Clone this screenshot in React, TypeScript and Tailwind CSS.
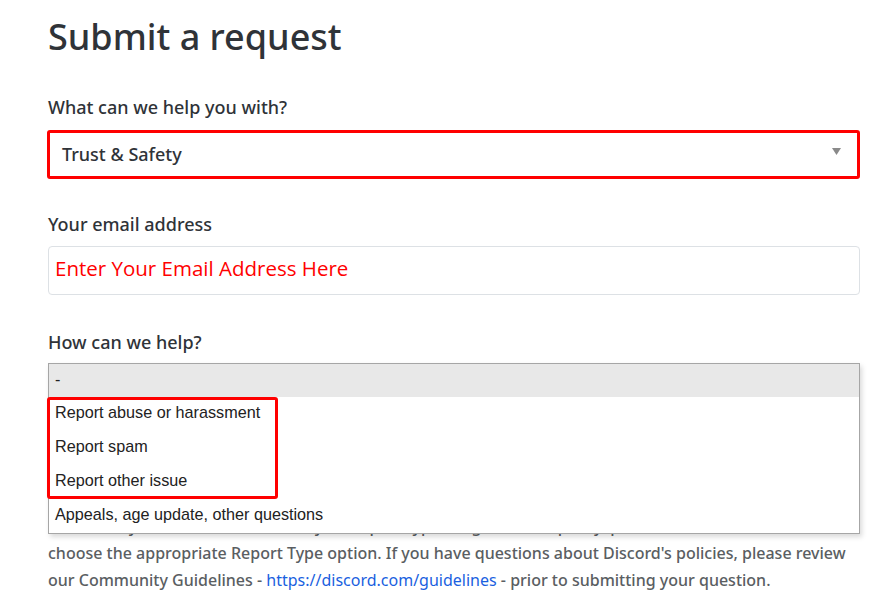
import React from 'react'

const options = [
  'Report abuse or harassment',
  'Report spam',
  'Report other issue',
  'Appeals, age update, other questions',
]

export default function App() {
  return (
    <div
      className="min-h-screen bg-white text-[#2f3338]"
      style={{ fontFamily: '"Noto Sans", "Open Sans", sans-serif' }}
    >
      <div className="ml-[48px] w-[812px] pt-[15px]">
        <h1 className="text-[36px] leading-[44px] font-medium">Submit a request</h1>

        {/* Request type */}
        <label className="block mt-[36px] text-[18px] leading-[24px] font-medium">
          What can we help you with?
        </label>
        <div className="mt-[11px] -ml-px w-[813px] h-[49px] border-[3px] border-[#ff0000] rounded-[3px] flex items-center justify-between pl-[12px] pr-[16px]">
          <span className="text-[18px] font-medium">Trust &amp; Safety</span>
          <svg width="9" height="7" viewBox="0 0 9 7" className="mt-[-6px]">
            <path d="M0 0 H9 L4.5 7 Z" fill="#8a8a8a" />
          </svg>
        </div>

        {/* Email */}
        <label className="block mt-[33px] text-[18px] leading-[24px] font-medium">
          Your email address
        </label>
        <div className="mt-[10px] h-[49px] border border-[#dde1e5] rounded-[4px] flex items-center px-[6px] pb-[5px]">
          <span
            className="text-[20.5px] text-[#ff0000]"
            style={{ fontFamily: '"Open Sans", sans-serif' }}
          >
            Enter Your Email Address Here
          </span>
        </div>

        {/* Help topic */}
        <label className="block mt-[35px] text-[18px] leading-[24px] font-medium">
          How can we help?
        </label>
        <div className="relative mt-[9px]">
          <div className="h-[49px] border border-[#dde1e5] rounded-[4px]" />

          <p className="mt-[74px] text-[16px] leading-[27px] font-medium text-[#5a5e62]">
            Please note: if you are reporting a violation of our Terms of Service or
            <br />
            Community Guidelines, make sure your report type is right for the policy, p
            <br />
            choose the appropriate Report Type option. If you have questions about Discord's policies, please review
            our Community Guidelines -{' '}
            <a href="#" className="text-[#1a5fe0] font-normal">
              https://discord.com/guidelines
            </a>{' '}
            - prior to submitting your question.
          </p>

          {/* Open dropdown list */}
          <div
            className="absolute left-0 top-0 w-[812px] bg-white border border-[#a6a6a6] shadow-[2px_3px_5px_rgba(0,0,0,0.15)] text-[16.2px] text-[#222]"
            style={{ fontFamily: '"Liberation Sans", Arial, sans-serif' }}
          >
            <div className="h-[33px] bg-[#e8e8e8] flex items-center px-[6px] pb-[2px]">-</div>
            {options.map((o) => (
              <div key={o} className="h-[34px] flex items-center px-[6px] pb-[3px]">
                {o}
              </div>
            ))}
          </div>

          {/* Highlight box */}
          <div className="absolute left-[-1px] top-[34px] w-[231px] h-[102px] border-[3px] border-[#ff0000] rounded-[3px]" />
        </div>
      </div>
    </div>
  )
}
